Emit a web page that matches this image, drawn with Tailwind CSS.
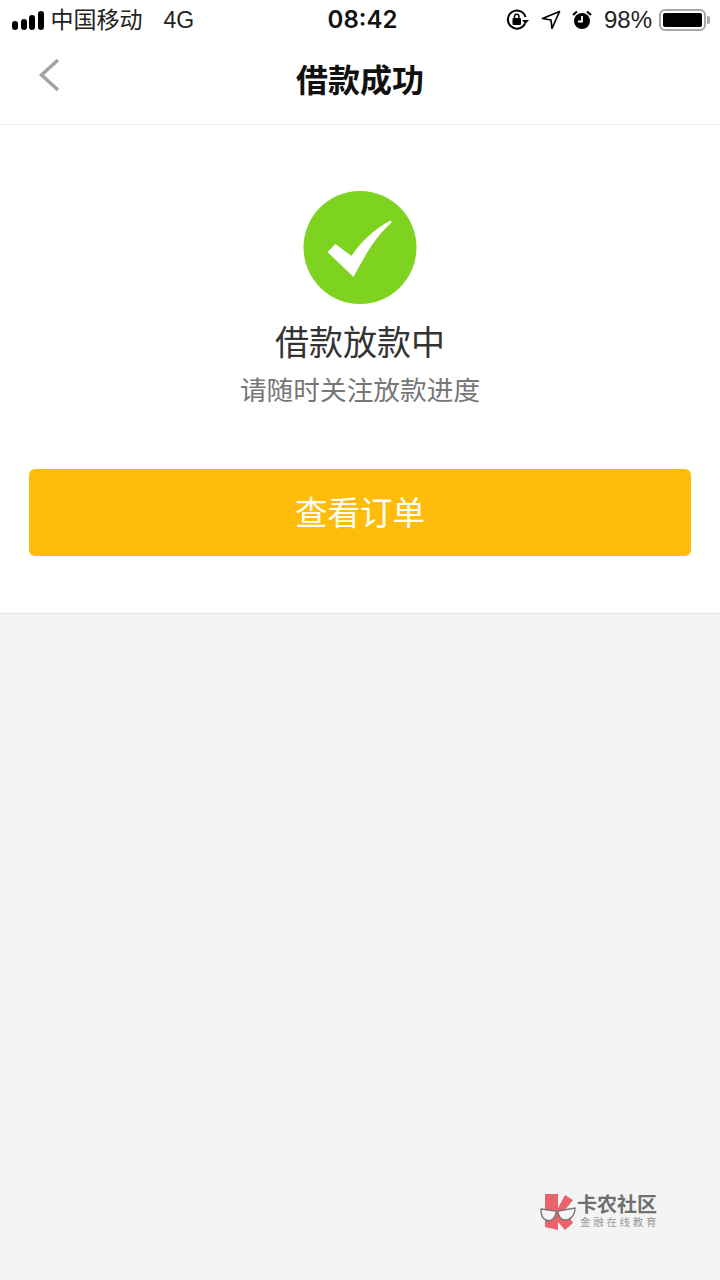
<!DOCTYPE html>
<html lang="zh-CN">
<head>
    <meta charset="UTF-8">
    <meta name="viewport" content="width=device-width, initial-scale=1.0">
    <title>借款成功</title>
    <script src="https://cdn.jsdelivr.net/npm/@tailwindcss/browser@4"></script>
</head>
<body class="relative w-[720px] h-[1280px] overflow-hidden bg-[#f4f4f4] flex flex-col font-['Liberation_Sans','Noto_Sans_CJK_SC',sans-serif]">
    <!-- status bar -->
    <div class="h-10 bg-white flex items-center justify-between pl-3 pr-[10px] text-[#222] shrink-0">
        <div class="flex items-center w-[258px]">
            <div class="flex items-end gap-[2.5px] h-[20px] pb-[0.5px]">
                <span class="w-[6px] h-[9px] rounded-[3px] bg-black"></span>
                <span class="w-[6px] h-[11px] rounded-[3px] bg-black"></span>
                <span class="w-[6px] h-[15px] rounded-[3px] bg-black"></span>
                <span class="w-[6px] h-[19px] rounded-[3px] bg-black"></span>
            </div>
            <span class="ml-[7px] text-[23px] leading-none">中国移动</span>
            <span class="ml-[21px] text-[23px] leading-none">4G</span>
        </div>
        <div class="text-[24px] font-semibold leading-none font-['Inter',sans-serif] text-[#111] translate-x-[1.5px]">08:42</div>
        <div class="flex items-center justify-end w-[258px]">
            <svg width="24" height="24" viewBox="0 0 24 24" fill="none" class="mr-[12px]">
                <path d="M20 15.500A9 9 0 1 1 20.500 9" stroke="#000" stroke-width="2"/>
                <path d="M17 12h7l-3.500 4z" fill="#000"/>
                <rect x="7.500" y="10" width="8.500" height="7" rx="1" fill="#000"/>
                <path d="M9.500 10V8.500a2.200 2.200 0 0 1 4.400 0V10" stroke="#000" stroke-width="1.500"/>
            </svg>
            <svg width="20" height="20" viewBox="0 0 20 20" fill="none" class="mr-[11px]">
                <path d="M18.500 1.500 1.500 8.500l8.500 1.500 1 8.500z" stroke="#000" stroke-width="1.700" stroke-linejoin="round"/>
            </svg>
            <svg width="20" height="20" viewBox="0 0 20 20" class="mr-[12px]">
                <circle cx="10" cy="11" r="8" fill="#000"/>
                <path d="M10 6v5.500H6" stroke="#fff" stroke-width="1.800" fill="none"/>
                <path d="M1 5 5 1.500M19 5l-4-3.500" stroke="#000" stroke-width="2.200"/>
            </svg>
            <span class="text-[24px] leading-none">98%</span>
            <div class="ml-[7px] w-[47px] h-[22px] border-2 border-[#a8a8a8] rounded-[6px] p-[2px]">
                <div class="h-full bg-black rounded-[2px]"></div>
            </div>
            <span class="ml-[1px] w-[3px] h-[8px] bg-[#aaa] rounded-r-[2px]"></span>
        </div>
    </div>

    <!-- nav bar -->
    <div class="relative h-[85px] bg-white border-b border-[#ececec] flex items-center justify-center shrink-0">
        <svg width="24" height="36" viewBox="0 0 24 36" fill="none" class="absolute left-[38px] top-[17px]">
            <path d="M20 3 3.500 18 20 33" stroke="#a3a3a3" stroke-width="3.500"/>
        </svg>
        <h1 class="text-[32px] font-bold text-[#111] leading-none -mt-[3px]">借款成功</h1>
    </div>

    <!-- result card -->
    <div class="h-[489px] bg-white border-b border-[#e2e2e2] flex flex-col items-center pt-[66px] px-[29px] shrink-0">
        <div class="w-[113px] h-[113px] rounded-full bg-[#7ed321] flex items-center justify-center -translate-x-[0.5px]">
            <svg width="65" height="58" viewBox="0 0 65 58" class="mt-[2px]">
                <path d="M0 32 8 24 24 36C33 22 47 9 62 1 64 0 65 2 63 3.500 48 17 37 36 26 57Z" fill="#fff"/>
            </svg>
        </div>
        <div class="mt-[17px] text-[34px] leading-[44px] text-[#333]">借款放款中</div>
        <div class="mt-[8px] text-[26.700px] leading-[36px] text-[#777]">请随时关注放款进度</div>
        <button class="mt-[60px] w-full h-[87px] pt-[3px] rounded-[6px] bg-[#ffbc0a] text-white text-[32.500px]">查看订单</button>
    </div>

    <!-- watermark -->
    <div class="absolute left-[540px] top-[1192px] flex items-center">
        <svg width="36" height="39" viewBox="0 0 36 39" fill="none">
            <path d="M5 2H18V16L25 3 33 8 25 18 33 31 25 38 18 30V38L5 35z" fill="#e8636b"/>
            <path d="M1 17 16 19C16 27 10 30 6 28 2 27 1 22 1 17Z" fill="#f4f4f4" stroke="#777" stroke-width="1.400"/>
            <path d="M18 19 35 16C35 24 30 28 25 28 21 28 18 24 18 19Z" fill="#f4f4f4" stroke="#777" stroke-width="1.400"/>
        </svg>
        <div class="ml-[1px] flex flex-col text-[#6f6f6f]">
            <span class="text-[20px] font-bold leading-[22px]">卡农社区</span>
            <span class="ml-[3px] text-[10.500px] leading-[13px] tracking-[2.700px] text-[#999]">金融在线教育</span>
        </div>
    </div>
</body>
</html>
